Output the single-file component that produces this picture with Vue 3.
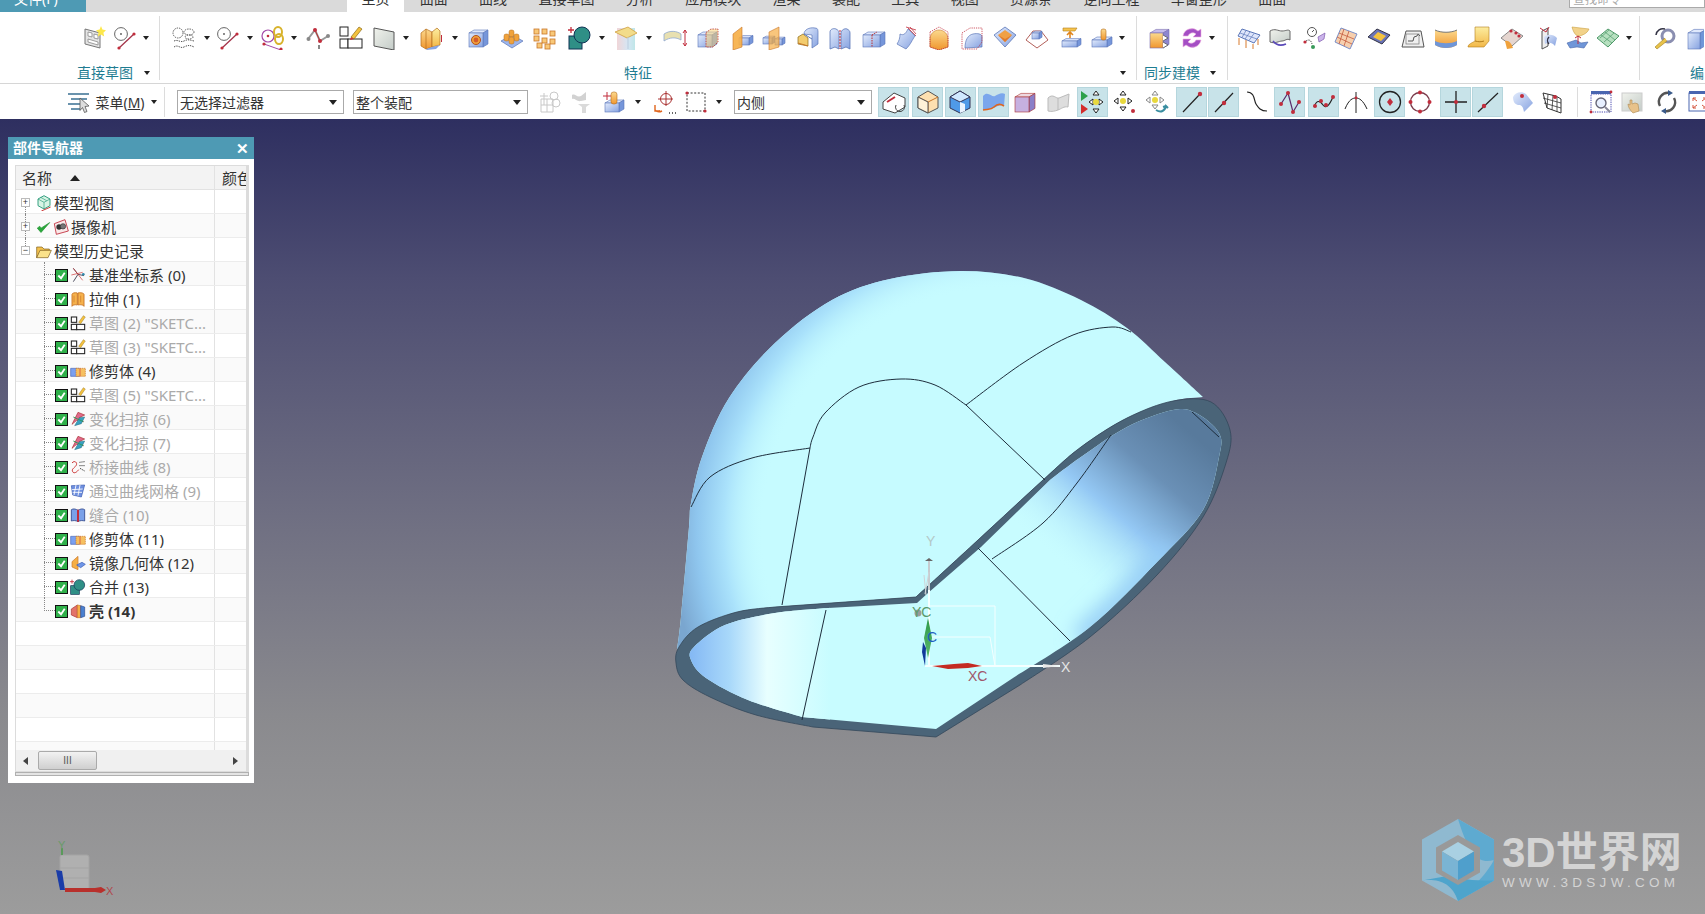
<script setup>
const pt = (p) => p[0] + ' ' + p[1]
const cr = (pts) => {
  let s = ''
  for (let i = 0; i < pts.length - 1; i++) {
    const p0 = pts[i - 1] || pts[i], p1 = pts[i], p2 = pts[i + 1], p3 = pts[i + 2] || p2
    const c1 = [p1[0] + (p2[0] - p0[0]) / 6, p1[1] + (p2[1] - p0[1]) / 6]
    const c2 = [p2[0] - (p3[0] - p1[0]) / 6, p2[1] - (p3[1] - p1[1]) / 6]
    s += ' C' + pt(c1) + ' ' + pt(c2) + ' ' + pt(p2)
  }
  return s
}
const open = (pts) => 'M' + pt(pts[0]) + cr(pts)

const domeP = [[677,650],[681,617],[689,527],[691,503],[702,457],[729,398],[775,343],[832,300],[890,279],[960,271],[1024,278],[1081,300],[1127,328],[1165,362],[1203,397]]
const rimTopBack = [[1203,397],[1173,401],[1127,418],[1081,447],[1043,480],[978,540],[916,597]]
const rimLeftBack = [[775,607],[737,612],[698,627],[679,647],[677,650]]
const domePath = open(domeP) + cr(rimTopBack) + ' L775 607' + cr(rimLeftBack) + ' Z'

const outerPath = 'M916 597' + cr([[916,597],[978,540],[1043,480],[1081,447],[1127,418],[1173,401],[1211,402],[1230,430],[1226,463],[1203,517],[1157,575],[1090,637],[1020,685]]) +
  ' L936 737 L813 727' + cr([[813,727],[756,715],[710,697],[683,680],[676,663],[679,647],[698,627],[737,612],[775,607]]) + ' Z'
const innerPath = 'M917 603 L828 608' + cr([[828,608],[775,613],[725,625],[694,647],[691,660],[706,678],[748,700],[802,717]]) +
  ' L936 729 L1013 678' + cr([[1013,678],[1090,627],[1157,562],[1203,510],[1219,457],[1219,433],[1196,413],[1173,410],[1127,427],[1081,457],[1050,480]]) + ' L981 547 L928 593 Z'

const edges = [
  open([[691,507],[710,477],[752,458],[810,448]]),
  'M810 448 L782 605',
  open([[810,448],[813,437],[825,413],[859,387],[901,379],[935,385],[966,405]]) + ' L1045 480',
  open([[966,405],[1023,363],[1073,335],[1112,327],[1131,332]]),
  'M826 610 L802 720',
  'M978 548 L1070 641',
  open([[992,559],[1043,523],[1077,483],[1111,435]]),
  'M1192 412 L1219 437',
]
const rimGlow = open([[1080,640],[1130,592],[1170,550]])

const box = (x, y, w, h, d, f = 'url(#gb)', t = '#dfe8fc', r = '#7696da', st = '#5a76b8') =>
  `<path d="M${x} ${y}l${d} ${-d * .6}h${w}l${-d} ${d * .6}z" fill="${t}" stroke="${st}" stroke-width=".6"/>` +
  `<path d="M${x + w} ${y}l${d} ${-d * .6}v${h}l${-d} ${d * .6}z" fill="${r}" stroke="${st}" stroke-width=".6"/>` +
  `<rect x="${x}" y="${y}" width="${w}" height="${h}" fill="${f}" stroke="${st}" stroke-width=".6"/>`
const rd = (x, y, r = 1.6) => `<circle cx="${x}" cy="${y}" r="${r}" fill="#c12d3c"/>`

const I = {
  star: '<path d="M2 3l15 4v15L2 18z" fill="#e4e4e4" stroke="#777"/><path d="M5 6l4 1v4l-4-1zM11 8l4 1v4l-4-1zM5 13l10 3v3L5 16z" fill="#fff" stroke="#888" stroke-width=".8"/><path d="M18 0l1.4 3.6 3.6.6-2.6 2.6.8 3.8-3.2-2-3.2 2 .8-3.8-2.6-2.6 3.6-.6z" fill="#fde84c"/>',
  cline: '<circle cx="8" cy="8" r="6.4" fill="#fff" stroke="#666"/><circle cx="8" cy="8" r=".9" fill="#555"/><path d="M6 22L21 8" stroke="#a33349" stroke-width="1.3"/>' + rd(6, 22) + rd(21, 8),
  ell: '<g fill="none" stroke="#555" stroke-dasharray="1.4 1"><circle cx="6" cy="7" r="5"/><ellipse cx="17" cy="6" rx="5" ry="3"/><ellipse cx="17" cy="11" rx="4" ry="2"/><path d="M2 15c4-2 6 2 10 0s6-1 10 0M2 21c4-3 6 2 10 0s6-2 10 0"/></g>',
  chain: '<circle cx="7" cy="10" r="6" fill="#fff" stroke="#a24aa8" stroke-width="1.2"/><circle cx="7" cy="10" r="1.3" fill="#c12d3c"/><g fill="none" stroke="#d8b32c" stroke-width="2"><ellipse cx="17" cy="6" rx="4" ry="5"/><ellipse cx="18" cy="13" rx="4" ry="5"/></g><path d="M3 18l17 6" stroke="#a24aa8"/>' + rd(3, 18) + rd(20, 23),
  zig: '<path d="M2 13L9 4l5 11 8-5" fill="none" stroke="#999" stroke-width="2"/><path d="M9 4l5 11" stroke="#b33"/><circle cx="2.5" cy="13" r="2" fill="#888"/><circle cx="22" cy="10" r="2" fill="#888"/>' + rd(9, 4, 2) + rd(14, 15, 2) + '<path d="M13 19v4" stroke="#888" stroke-width="2"/>',
  skbox: '<g fill="#fff" stroke="#222"><rect x="1" y="1" width="8" height="9"/><rect x="1" y="13" width="8" height="9"/><rect x="9" y="13" width="14" height="9"/></g><path d="M12 11L20 1l3 2-8 10z" fill="#f4c23e" stroke="#8a6a1a" stroke-width=".7"/><path d="M12 11l3 2-4 1z" fill="#c33"/>',
  plane: '<path d="M2 2l20 4v18L2 20z" fill="url(#gs)" stroke="#555"/>',
  extr: '<path d="M2 7l5-4 6 3v15l-6 2-5-3z" fill="url(#go)" stroke="#b46d1c" stroke-width=".7"/><path d="M13 6l5-4 3 3v14l-8 2z" fill="url(#gy)" stroke="#b46d1c" stroke-width=".7"/><path d="M2 18l5 5 6-2 8-2-4 4-9 1z" fill="#86a5e4"/><path d="M7 3v20" stroke="#b46d1c" stroke-width=".7"/><path d="M22.5 16V9" stroke="#c12d3c"/>',
  hole: box(2, 7, 14, 14, 5) + '<circle cx="9" cy="14" r="4.5" fill="#f0a23c" stroke="#b4501c"/><circle cx="9" cy="14" r="2.4" fill="#d45a2c"/>',
  pads: '<path d="M1 15l11-6 11 6-11 7z" fill="#9db6ec" stroke="#5a76b8" stroke-width=".7"/><g fill="#f0a23c" stroke="#b46d1c" stroke-width=".5"><rect x="9" y="4" width="5" height="7" rx="2"/><rect x="4" y="8" width="5" height="7" rx="2"/><rect x="14" y="8" width="5" height="7" rx="2"/><rect x="9" y="11" width="5" height="7" rx="2"/></g>',
  patt: '<g fill="#f8c878" stroke="#c9772a" stroke-width=".8"><rect x="1" y="3" width="5" height="5"/><rect x="9" y="3" width="5" height="5"/><rect x="17" y="5" width="5" height="5"/><rect x="1" y="10" width="5" height="5"/><rect x="9" y="12" width="5" height="5"/><rect x="17" y="13" width="5" height="5"/><rect x="4" y="17" width="5" height="5"/><rect x="12" y="18" width="5" height="5"/></g>',
  unite: '<rect x="1" y="10" width="13" height="13" fill="#2f8f86" stroke="#135"/><circle cx="14" cy="9" r="8" fill="#2f8f86" stroke="#135"/><path d="M3 1v6M0 4h6" stroke="#c12d3c" stroke-width="1.3"/>',
  trim: '<rect x="3" y="2" width="18" height="22" fill="url(#gt)"/><path d="M1 6l13-5 9 6-10 5z" fill="#f2dc8a" stroke="#d0a040" stroke-width=".8"/><path d="M14 11v12" stroke="#bcd" />',
  offs: '<path d="M1 8c6-4 13-3 17 0v6c-5-3-11-3-17 1z" fill="#e8e0b0" stroke="#8fa8d0" stroke-width=".8"/><path d="M22 4v16M20 7l2-3 2 3M20 17l2 3 2-3" fill="none" stroke="#c12d3c"/>',
  ubox: box(2, 9, 14, 12, 5) + '<path d="M10 6.500l5-3.500h7v13l-5 5h-7z" fill="#f8d27a" fill-opacity=".55" stroke="#b33" stroke-dasharray="1.5 1" stroke-width=".8"/>',
  mir: box(9, 12, 10, 7, 4) + '<path d="M3 8l9-7v20l-9 3z" fill="#f6ae45" fill-opacity=".9" stroke="#c9772a" stroke-width=".6"/>',
  mir2: box(1, 12, 9, 6, 3) + box(13, 13, 7, 6, 3) + '<path d="M7 6l10-5v20l-10 3z" fill="#f6ae45" fill-opacity=".7" stroke="#c9772a" stroke-width=".6"/>',
  shellb: '<path d="M2 11l5-3 5 4v8l-10-2z" fill="#f3cc6e" stroke="#8a6a1a" stroke-width=".7"/><path d="M8 8c0-4 5-7 11-6 3 0 3 2 3 5v11l-6 4v-13z" fill="url(#gb)" stroke="#5a76b8" stroke-width=".7"/><path d="M8 8l8 5" stroke="#5a76b8"/><path d="M2 17l10 3" stroke="#c9772a"/>',
  book: '<path d="M2 6c0-3 4-4 6-3s3 2 3 4v16l-4-2-5 2zM13 7c0-3 4-5 6-4s3 2 3 4v16l-4-2-5 2z" fill="url(#gb)" stroke="#5a76b8" stroke-width=".8"/><path d="M12 4v19" stroke="#c12d3c" stroke-dasharray="2 1"/>',
  split: box(1, 9, 17, 12, 5) + '<path d="M10 9v12M10 9l5-3" stroke="#b33" stroke-dasharray="1.5 1" fill="none"/>',
  sfold: '<path d="M6 8c4 2 6-1 8-5l7 7c-3 4-4 8-9 13l-9-5c2-3 3-6 3-10z" fill="url(#gb)" stroke="#5a76b8" stroke-width=".7"/><path d="M12 1l10 3M14 2l8 8M16 1l6 7" stroke="#c12d3c" stroke-width=".8"/>',
  dhat: '<path d="M3 13c0-5 4-9 9-9s9 4 9 9v8l-9 3-9-3z" fill="url(#go)" stroke="#c9772a" stroke-width=".6"/><path d="M3 6l9-5 9 5v15l-9 3-9-3z" fill="none" stroke="#c12d3c" stroke-dasharray="1.2 1" stroke-width=".8"/>',
  dcurve: '<path d="M5 22c0-8 3-13 8-14s8 0 9 2v11z" fill="url(#gb)" stroke="#5a76b8" stroke-width=".7"/><path d="M2 7l8-5h12v14l-5 7H2z" fill="none" stroke="#c12d3c" stroke-dasharray="1.2 1" stroke-width=".8"/>',
  bowl: '<path d="M12 1l11 8-11 12L1 9z" fill="url(#gb)" stroke="#5a76b8" stroke-width=".8"/><path d="M5 9l7-5 7 5-7 7z" fill="#f0a045"/><path d="M5 9l7 4 7-4-7 7z" fill="#e07b2c"/>',
  pyr: '<path d="M1 14L8 5h8l7 9-11 8z" fill="#fff" stroke="#b3605a"/>' + box(7, 7, 7, 6, 3, 'url(#gb)'),
  offa: '<path d="M4 2h14l-2 3H4z" fill="#f6c34c" stroke="#b47d1c" stroke-width=".6"/><path d="M11 12V6M8 9l3-3 3 3" fill="none" stroke="#e0851c" stroke-width="1.6"/>' + box(3, 15, 15, 6, 4),
  boss: box(2, 14, 15, 7, 5) + '<rect x="11" y="3" width="5" height="11" rx="2" fill="url(#go)" stroke="#b46d1c" stroke-width=".6"/>',
  sync: box(2, 7, 13, 15, 6, 'url(#go)', '#c6bcec', '#8e86d0', '#7a6db0') + '<path d="M15 9l5 3-5 3M15 16l5 3-5 3" fill="#fff" stroke="#555" stroke-width=".8"/>',
  refr: '<path d="M3 10a9 9 0 0 1 15-5l3-2v8h-8l3-3a5 5 0 0 0-8 2zM21 14a9 9 0 0 1-15 5l-3 2v-8h8l-3 3a5 5 0 0 0 8-2z" fill="#a44ec4" stroke="#f0b0e0" stroke-width=".6"/>',
  mesh: '<path d="M5 3l18 6-6 8L1 10z" fill="#dfe6fb" stroke="#5a76b8"/><path d="M9 4.500l-4 7M13 6l-5 7M17 7.500l-5 7M3 7l17 6" stroke="#5a76b8" stroke-width=".7"/><g stroke="#d87a2c" fill="none"><path d="M2 12v7M9 14v8M16 18v5M21 13v6"/></g>',
  wave: '<path d="M2 5c5-3 8 0 12 0s6-2 8 0v9c-3-2-5 1-8 1s-7 3-12 1z" fill="url(#gs)" stroke="#666"/><path d="M5 15c3 4 8 5 13 3" stroke="#5a49b8" fill="none" stroke-width="1.6"/>',
  gauge: '<circle cx="9" cy="6" r="4.500" fill="#fff" stroke="#555"/><path d="M9 6l2-2" stroke="#555"/><path d="M3 15c3-2 5-1 6 3" stroke="#555" fill="none" stroke-dasharray="1.5 1"/><path d="M15 11l7-4-1 6-5 3z" fill="#cbb4ea" stroke="#805ab0" stroke-width=".7"/>' + rd(2, 16) + '<circle cx="10" cy="21" r="2" fill="#3a9a5a"/>',
  grid: '<path d="M7 2l16 6-7 15L1 16z" fill="#f6cfae" stroke="#7a8fc8"/><path d="M5 7l15 6M3 11l15 7M10 3l-5 15M15 5l-5 15" stroke="#c45a3c" stroke-width=".8"/>',
  pat: '<path d="M1 11l9-8 13 6-8 9z" fill="#6a74b8" stroke="#334"/><path d="M6 11l5-5 8 4-5 5z" fill="#f4c23e"/>',
  frame: '<path d="M5 5h15l3 16H1z" fill="#f0f0f0" stroke="#555"/><path d="M7 15h5l1-4 3-1 1-2 2 2" stroke="#555" fill="none"/><rect x="5" y="8" width="13" height="10" fill="none" stroke="#777" stroke-width=".7"/>',
  uflag: '<path d="M1 4c6 3 16 3 22 0v15c-6 4-16 4-22 0z" fill="url(#go)"/><path d="M1 15c6 3 16 3 22 0v4c-6 4-16 4-22 0z" fill="#6f96d8"/><path d="M1 4c6 3 16 3 22 0" stroke="#777" fill="none"/>',
  ysurf: '<path d="M9 1h14v14l-5 6H2c0-3 4-4 7-6z" fill="url(#gy)" stroke="#b47d1c" stroke-width=".6"/><path d="M9 15c4 1 6 1 9 0" stroke="#b47d1c" fill="none"/>',
  netw: '<path d="M1 12l11-9 11 7-11 10z" fill="#e6d6d0" stroke="#888"/><path d="M5 15c4-1 6 2 8 7l-6 1z" fill="#f0a23c"/>' + rd(11, 5) + rd(16, 7) + rd(19, 10),
  plc: '<path d="M7 5l6-3v18l-6 3z" fill="#eee" stroke="#555"/><path d="M9 11c4-3 9-3 13 1l-2 8c-3-4-7-4-10-2z" fill="url(#gb)"/><path d="M5 2l6 4 3-5" stroke="#c12d3c" fill="none"/><path d="M14 11a5 5 0 0 0 0 7" stroke="#334" fill="none" stroke-width="1.4"/>',
  ybr: '<path d="M6 1l17 2c-2 5-7 6-9 7s-6-1-8-9z" fill="#f2d28a" stroke="#c9a040" stroke-width=".6"/><path d="M1 17l9-3 5 3 7-1-4 6-7-1-7 1z" fill="#6f96d8" stroke="#4a66a8" stroke-width=".6"/><path d="M12 10v8M9 12l3-2 3 2" stroke="#c12d3c" fill="none"/>',
  gmesh: '<path d="M1 12l11-9 11 7-11 11z" fill="#b7e0c0" stroke="#4f9a6a"/><path d="M5 9l11 8M9 6l10 8M8 16l10-9M4 12l9-8" stroke="#4f9a6a" stroke-width=".7"/>',
  tool: '<circle cx="16" cy="10" r="6" fill="none" stroke="#8a8eb0" stroke-width="3"/><path d="M13 12L3 21l2 2 10-8" fill="#e8c24a" stroke="#a08020" stroke-width=".6"/><path d="M4 9a7 7 0 0 1 9-6" stroke="#334" fill="none" stroke-width="1.5"/>',
  bcyl: box(3, 7, 12, 16, 6, 'url(#gb)', '#dfe8fc', '#6f96d8'),
  tcyl: box(3, 13, 14, 9, 5) + '<rect x="9" y="2" width="6" height="12" rx="2.500" fill="url(#go)" stroke="#b46d1c" stroke-width=".6"/><path d="M1 6h8M5 2v8" stroke="#c12d3c"/>',
  gr1: '<g fill="none" stroke="#c8c8c8"><path d="M3 9h12v13H3zM3 15h12M9 9v13M6 3v12M2 6h8"/><circle cx="16" cy="6" r="4"/><circle cx="18" cy="13" r="4"/></g>',
  gr2: '<path d="M3 5c3-2 5 3 9 1l5-4v8l-5 1c-4 1-6-3-9-2z" fill="#d2d2d2"/><path d="M9 14h12l-4 3v6h-4v-6z" fill="#dadada"/>',
  tgt: '<circle cx="13" cy="9" r="5.500" fill="none" stroke="#a33"/><path d="M13 1v15M5 9h15" stroke="#a33"/><path d="M2 20c2 2 5 2 7 1M2 15v6h5" fill="none" stroke="#e0651c" stroke-width="1.4"/><path d="M16 23h1M19 23h1M22 23h1" stroke="#333" stroke-width="1.6"/>',
  dash: '<rect x="3" y="3" width="18" height="18" fill="none" stroke="#333" stroke-dasharray="2 1.600"/>' + rd(3, 3) + rd(21, 21),
  cat1: '<path d="M1 12L12 3l11 5v9l-10 6-12-4z" fill="#fff" stroke="#444"/><path d="M5 12l8-5" stroke="#c12d3c" stroke-width="2" fill="none"/><path d="M14 15a4.500 4.500 0 1 0 8 0" fill="none" stroke="#444"/>',
  cat2: '<path d="M12 1l10 6v11l-10 5L2 18V7z" fill="#fde0b0" stroke="#555"/><path d="M12 12l10-5M12 12L2 7M12 12v11" stroke="#c9772a"/><path d="M2 7l10 5v11L2 18z" fill="#fff2d8" stroke="#555"/>',
  cat3: '<path d="M12 1l10 6v11l-10 5L2 18V7z" fill="#4f9ae8" stroke="#335"/><path d="M2 7l10-6 10 6-10 5z" fill="#cfe8ff" stroke="#335"/><path d="M12 12l5 2v7l-5 2z" fill="#eaf4ff"/>',
  cat4: '<path d="M1 6c5-6 9 2 12 0s7-4 10-2l-1 12c-4-2-7 1-11 2s-7 2-10 2z" fill="#7aa6ec"/><path d="M1 20c5-1 8 0 11-3s7-3 10-1" stroke="#e0651c" stroke-width="1.6" fill="none"/>',
  cat5: box(2, 7, 14, 15, 6, '#c6b0e0', '#eed8e0', '#8a7fc8', '#a33'),
  gsf: '<path d="M1 8c5-5 8 1 11 0l10-4-1 13c-4-1-7 2-10 3s-6 2-10 1z" fill="#ddd" stroke="#bbb"/><path d="M11 8v12" stroke="#bbb"/>',
  snap: '<path d="M1 1l7 5-7 5z" fill="#2ca04a"/><path d="M1 14l7 5-7 5z" fill="#d42c2c"/><g fill="#fff" stroke="#222"><path d="M16 1l3 4h-6zM16 23l3-4h-6zM9 12l4-3v6zM23 12l-4-3v6z"/></g><circle cx="16" cy="12" r="3" fill="#e8d83c"/>',
  snap2: '<g fill="#fff" stroke="#222"><path d="M11 1l3 4H8zM11 21l3-4H8zM2 11l4-3v6zM20 11l-4-3v6z"/></g><circle cx="11" cy="11" r="3" fill="#e8d83c"/><circle cx="21" cy="21" r="2" fill="#c12d3c"/>',
  snap3: '<g fill="#fff" stroke="#888"><path d="M10 1l3 4H7zM10 19l3-4H7zM1 10l4-3v6zM19 10l-4-3v6z"/></g><circle cx="10" cy="10" r="3" fill="#e8d83c"/><path d="M11 20c5 3 9 1 10-4l2 2M21 16l-3 1" stroke="#3a8ea0" fill="none" stroke-width="2"/>',
  sl1: '<path d="M3 22L20 4" stroke="#222" stroke-width="1.2"/>' + rd(20, 4, 2.2),
  sl2: '<path d="M3 22L21 3" stroke="#222" stroke-width="1.2"/>' + rd(12, 13, 2.2),
  tan: '<path d="M2 2c8 0 7 9 9 12s4 7 11 7" fill="none" stroke="#222" stroke-width="1.2"/>',
  wz: '<path d="M3 14L10 3l5 19 6-10" fill="none" stroke="#5a2a6a" stroke-width="1.2"/>' + rd(3, 14, 2) + rd(10, 3, 2) + rd(15, 22, 2) + rd(21, 12, 2),
  wv: '<path d="M2 17c3-8 6-6 9-2s6 1 10-8" fill="none" stroke="#222" stroke-width="1.2"/>' + rd(3, 16, 2) + rd(9, 11, 2) + rd(14, 15, 2) + rd(21, 7, 2),
  arcx: '<path d="M1 19c4-10 8-11 11-11s7 2 11 11" fill="none" stroke="#222"/><path d="M12 2v21" stroke="#222"/>' + rd(12, 8, 1.4),
  ccen: '<circle cx="12" cy="12" r="10.500" fill="none" stroke="#222" stroke-width="1.3"/><path d="M12 8l3 4-3 4-3-4z" fill="#c12d3c"/>',
  cq: '<circle cx="12" cy="12" r="9.500" fill="none" stroke="#7a3a4a" stroke-width="1.3"/>' + rd(12, 2.5, 2) + rd(12, 21.5, 2) + rd(2.5, 12, 2) + rd(21.5, 12, 2),
  cross: '<path d="M12 1v22M1 12h22" stroke="#222" stroke-width="1.3"/>' + rd(12, 12, 2),
  sl3: '<path d="M2 22L22 3" stroke="#222" stroke-width="1.2"/>' + rd(8, 16, 2.2),
  sfc: '<path d="M3 7c2-5 9-6 13-3l7 9-9 9c-1-5-2-7-5-7s-6-2-6-8z" fill="url(#gb)"/>' + rd(12, 6, 2),
  gmsh: '<path d="M3 3l13 3 5 3v14l-14-5z" fill="#fff" stroke="#333"/><path d="M3 8l18 5M4 13l17 5M8 4l-1 14M13 5l-1 15M17 7v15" stroke="#333" stroke-width=".8"/>' + rd(15, 7, 2),
  zfit: '<rect x="2" y="4" width="20" height="18" fill="#fff" stroke="#4a4ab0" stroke-dasharray="1.3 1"/><path d="M2 1h20v3H2z" fill="#4a66b0"/><circle cx="12" cy="13" r="5" fill="#e8f0ff" stroke="#667" stroke-width="1.4"/><path d="M16 17l5 5" stroke="#889" stroke-width="2"/>' + rd(2, 22, 1.4) + rd(22, 2, 1.4),
  pan: '<rect x="2" y="3" width="20" height="18" fill="url(#gs)" stroke="#ccc"/><path d="M13 23c-3-3-5-6-5-9l2 1v-5l2 0v4l3-1 3 1 1 7z" fill="#e8c28a" stroke="#b08a50" stroke-width=".6"/>',
  rot: '<path d="M5 16A9 9 0 0 1 15 3M19 8a9 9 0 0 1-10 13" fill="none" stroke="#555" stroke-width="2.4"/><path d="M13 0l5 3-5 3zM11 24l-5-3 5-3z" fill="#3a5a8a"/>',
  fit: '<rect x="2" y="3" width="21" height="18" fill="#fff" stroke="#4a66b0"/><path d="M2 1h21v3H2z" fill="#4a66b0"/><path d="M6 8l4 3M6 8h3M6 8v3M19 8l-4 3M19 8h-3M19 8v3M6 18l4-3M6 18h3M6 18v-3M19 18l-4-3M19 18h-3M19 18v-3" stroke="#d4553c" fill="none"/>',
  nview: '<path d="M12 1l9 5v10l-9 5-9-5V6z" fill="#d8f4e4" stroke="#2a9a7a" stroke-width="1.4"/><path d="M3 6l9 5 9-5M12 11v10M7 3.500l9 5" stroke="#2a9a7a" fill="none"/><path d="M8 24l14-6" stroke="#c33" stroke-width="1.4"/>',
  ncam: '<path d="M2 7l16-6 5 17-18 5z" fill="#f8e8e8" stroke="#c12d3c" stroke-width="1.3"/><circle cx="9" cy="12" r="4" fill="#333"/><circle cx="15" cy="11" r="4" fill="#777" stroke="#333"/>',
  ncheck: '<path d="M2 13l6 7L22 4l-14 9-2-3z" fill="#2aa83c" stroke="#1b8f2c"/>',
  nfold: '<path d="M1 6h8l3 3h8v3H7l-6 10z" fill="#f3c14e" stroke="#7a5a1a"/><path d="M6 11h17l-5 11H1z" fill="#fbe28a" stroke="#7a5a1a"/>',
  ncs: '<path d="M5 2l7 9 9 2M12 11L5 22" fill="none" stroke="#445" stroke-width="1.4"/><path d="M5 2l14 18M2 12l17-4" stroke="#c33" fill="none"/><circle cx="20" cy="11" r="2" fill="#38a"/>',
  next: '<path d="M3 5c0-2 5-3 8-2v18c-3-1-8 0-8 2zM21 5c0-2-6-3-9-2v18c3-1 9 0 9 2z" fill="#f6b24c" stroke="#c9772a" stroke-width="1.4"/><path d="M6 7v10M16 7v10" stroke="#c9772a"/>',
  nsk: '<g fill="#fff" stroke="#222" stroke-width="1.6"><rect x="2" y="3" width="8" height="8"/><rect x="2" y="14" width="8" height="8"/><rect x="10" y="14" width="12" height="8"/></g><path d="M13 11L20 1l3 2-7 10z" fill="#f4c23e" stroke="#8a6a1a" stroke-width=".6"/>',
  ntrim: '<path d="M1 8h13v12H1z" fill="#7aa0f0" stroke="#4a66b8"/><path d="M9 8h14v12H9z" fill="#f6c060" stroke="#c9772a" stroke-dasharray="2 1"/><path d="M15 8v12" stroke="#c33"/>',
  nsw: '<path d="M3 20L12 2l10 4-8 4 6 6-10-2z" fill="#e06a8c" stroke="#a33"/><path d="M7 22l7-12 8-1-5 10z" fill="#38a0c0" stroke="#267" stroke-width=".7"/><path d="M5 9l15 7" stroke="#2a9a5a" stroke-width="1.4"/>',
  nbr: '<path d="M3 6c4-5 9 0 6 4s-7 5-5 9 7 0 9-3" fill="none" stroke="#c33" stroke-width="1.5"/><path d="M14 5l8-1M14 10h8M15 14l7 4" stroke="#333" stroke-width="1.3" stroke-dasharray="2 1"/>',
  nmesh: '<path d="M2 4l20-1-5 18-13-3z" fill="#6f90e0" stroke="#3a5ab0"/><path d="M3 10l16-1M4 14l14 0M9 3l-3 15M15 3l-3 16" stroke="#fff" stroke-width="1.3"/>',
  nsew: '<path d="M2 4c3-2 7-1 10 1v17c-3-2-7-2-10-1zM22 4c-3-2-7-1-10 1v17c3-2 7-2 10-1z" fill="#7aa0e8" stroke="#334a90" stroke-width="1.3"/><path d="M12 4v18" stroke="#c12d3c" stroke-width="3"/>',
  nmir: '<path d="M3 10l9-8v20l-9-4z" fill="#f6ae45" stroke="#c9772a"/><path d="M10 15l8-4 5 3-7 5z" fill="#6f96e8" stroke="#3a5ab0"/>',
  nshell: '<path d="M2 9l9-6v19l-9-4z" fill="#e2736a" stroke="#a33"/><path d="M11 3l5 1v18l-5 0z" fill="#f6ae45" stroke="#c9772a"/><path d="M16 4l6 2v14l-6 2z" fill="#4a80d0" stroke="#2a4a90"/>',
}

const place = (list, start = 0) => {
  let cur = start
  return list.map((it) => {
    const w = it.w || (it.k === 'dd' ? 7 : it.on !== undefined ? 31 : 24)
    const l = it.x - w / 2
    const out = { k: 'i', ...it, w, ml: l - cur }
    cur = l + w
    return out
  })
}
const ic = (x, i) => ({ x, i })
const dd = (x) => ({ x, k: 'dd' })
const on = (x, i) => ({ x, i, on: true })

const groups = [
  { w: 160, start: 0, label: '直接草图', lx: 105, lw: 56, ddx: 147,
    items: [ic(95, 'star'), ic(125, 'cline'), dd(146)] },
  { w: 977, start: 161, label: '特征', lx: 639, lw: 28, ddx: 1124,
    items: [ic(185, 'ell'), dd(208), ic(229, 'cline'), dd(251), ic(274, 'chain'), dd(295), ic(319, 'zig'), ic(352, 'skbox'), ic(385, 'plane'), dd(407), ic(432, 'extr'), dd(456), ic(480, 'hole'), ic(513, 'pads'), ic(546, 'patt'), ic(581, 'unite'), dd(603), ic(627, 'trim'), dd(650), ic(676, 'offs'), ic(709, 'ubox'), ic(743, 'mir'), ic(775, 'mir2'), ic(809, 'shellb'), ic(841, 'book'), ic(875, 'split'), ic(907, 'sfold'), ic(940, 'dhat'), ic(973, 'dcurve'), ic(1006, 'bowl'), ic(1038, 'pyr'), ic(1072, 'offa'), ic(1103, 'boss'), dd(1123)] },
  { w: 91, start: 1138, label: '同步建模', lx: 1173, lw: 56, ddx: 1214,
    items: [ic(1161, 'sync'), ic(1193, 'refr'), dd(1213)] },
  { w: 412, start: 1229, label: '', items: [ic(1250, 'mesh'), ic(1281, 'wave'), ic(1316, 'gauge'), ic(1347, 'grid'), ic(1380, 'pat'), ic(1414, 'frame'), ic(1447, 'uflag'), ic(1479, 'ysurf'), ic(1513, 'netw'), ic(1548, 'plc'), ic(1579, 'ybr'), ic(1609, 'gmesh'), dd(1630)] },
  { w: 64, start: 1642, label: '编辑', lx: 1706, lw: 28, items: [ic(1666, 'tool'), ic(1699, 'bcyl')] },
].map((g) => ({
  ...g,
  row: place(g.items, g.start),
  labelMl: g.label ? g.lx - g.lw / 2 - g.start : 0,
  ddMl: g.ddx ? g.ddx - 3.5 - (g.lx + g.lw / 2) : 0,
}))

const toolbar = place([
  { x: 79, k: 'menu', i: 'menu', w: 24 },
  { x: 120, k: 'txt', w: 52 },
  dd(154),
  { x: 164, k: 'sep', w: 1 },
  { x: 260.5, k: 'sel', w: 167, t: '无选择过滤器' },
  { x: 440.5, k: 'sel', w: 175, t: '整个装配' },
  ic(550, 'gr1'), ic(581, 'gr2'), ic(614, 'tcyl'), dd(638), ic(665, 'tgt'), ic(696, 'dash'), dd(719),
  { x: 803, k: 'sel', w: 138, t: '内侧' },
  on(893.5, 'cat1'), on(927.5, 'cat2'), on(960, 'cat3'), on(993.5, 'cat4'), ic(1025, 'cat5'), ic(1059, 'gsf'), on(1092, 'snap'), ic(1124, 'snap2'), ic(1157, 'snap3'),
  on(1191.5, 'sl1'), on(1223.5, 'sl2'), ic(1257, 'tan'), on(1289.5, 'wz'), on(1323.5, 'wv'), ic(1356, 'arcx'), on(1389.5, 'ccen'), ic(1420, 'cq'), on(1455.5, 'cross'), on(1487.5, 'sl3'), ic(1522, 'sfc'), ic(1552, 'gmsh'),
  { x: 1577, k: 'sep', w: 1 },
  ic(1601, 'zfit'), ic(1632, 'pan'), ic(1667, 'rot'), ic(1699, 'fit'),
])

const tabs = ['曲面', '曲线', '直接草图', '分析', '应用模块', '渲染', '装配', '工具', '视图', '资源条', '逆向工程', '车窗整形', '曲面']

const topRows = [
  { t: '模型视图', i: 'nview', ex: '+' },
  { t: '摄像机', i: 'ncam', ex: '+', chk: true },
  { t: '模型历史记录', i: 'nfold', ex: '−' },
]
const kids = [
  ['基准坐标系 (0)', 'ncs', 0], ['拉伸 (1)', 'next', 0], ['草图 (2) "SKETC...', 'nsk', 1], ['草图 (3) "SKETC...', 'nsk', 1],
  ['修剪体 (4)', 'ntrim', 0], ['草图 (5) "SKETC...', 'nsk', 1], ['变化扫掠 (6)', 'nsw', 1], ['变化扫掠 (7)', 'nsw', 1],
  ['桥接曲线 (8)', 'nbr', 1], ['通过曲线网格 (9)', 'nmesh', 1], ['缝合 (10)', 'nsew', 1], ['修剪体 (11)', 'ntrim', 0],
  ['镜像几何体 (12)', 'nmir', 0], ['合并 (13)', 'unite', 0], ['壳 (14)', 'nshell', 0, 1],
].map(([t, i, g, b]) => ({ t, i, g, b }))
</script>

<template>
  <div class="app">
    <svg class="defs" width="0" height="0" aria-hidden="true">
      <defs>
        <linearGradient id="gb" x1="0" y1="0" x2="1" y2="1"><stop offset="0" stop-color="#e2ebfc"/><stop offset="1" stop-color="#86a2e0"/></linearGradient>
        <linearGradient id="go" x1="0" y1="0" x2="0" y2="1"><stop offset="0" stop-color="#fbd98e"/><stop offset="1" stop-color="#f0962e"/></linearGradient>
        <linearGradient id="gy" x1="0" y1="0" x2="0" y2="1"><stop offset="0" stop-color="#fcedA0"/><stop offset="1" stop-color="#f2b848"/></linearGradient>
        <linearGradient id="gs" x1="0" y1="0" x2="1" y2="1"><stop offset="0" stop-color="#f0f2ec"/><stop offset="1" stop-color="#c4ccc8"/></linearGradient>
        <linearGradient id="gt" x1="0" y1="0" x2="1" y2="0"><stop offset="0" stop-color="#f0d6d8"/><stop offset=".6" stop-color="#d6e6f4"/><stop offset="1" stop-color="#bfe6e8"/></linearGradient>
      </defs>
    </svg>

    <div class="tabs">
      <div class="tabrow">
        <div class="file">文件(F)</div>
        <div class="tab active">主页</div>
        <div v-for="(t, n) in tabs" :key="n" class="tab">{{ t }}</div>
        <div class="search">查找命令</div>
      </div>
    </div>

    <div class="ribbon">
      <div v-for="g in groups" :key="g.start" class="group" :class="{ last: g.start === 1642 }" :style="{ width: g.w + 'px' }">
        <div class="grow">
          <div v-for="(it, n) in g.row" :key="n" class="cell" :style="{ marginLeft: it.ml + 'px', width: it.w + 'px' }">
            <span v-if="it.k === 'dd'" class="tri"></span>
            <svg v-else class="ic" viewBox="0 0 24 24" v-html="I[it.i]"></svg>
          </div>
        </div>
        <div class="glabel" :style="{ paddingLeft: g.labelMl + 'px' }">
          <span class="lt">{{ g.label }}</span>
          <span v-if="g.ddx" class="tri lowtri" :style="{ marginLeft: g.ddMl + 'px' }"></span>
        </div>
      </div>
    </div>

    <div class="toolbar">
      <div v-for="(it, n) in toolbar" :key="n" class="cell" :class="{ on: it.on, sepc: it.k === 'sep' }" :style="{ marginLeft: it.ml + 'px', width: it.w + 'px' }">
        <span v-if="it.k === 'dd'" class="tri"></span>
        <span v-else-if="it.k === 'txt'" class="menut">菜单(<u>M</u>)</span>
        <div v-else-if="it.k === 'sel'" class="sel"><span>{{ it.t }}</span><i class="tri big"></i></div>
        <svg v-else-if="it.k === 'menu'" class="ic" viewBox="0 0 24 24">
          <path d="M1 3h21v2H1zM4 8h16v2H4zM1 13h12v2H1zM4 18h10v2H4z" fill="#6a93ad"/>
          <path d="M13 8l9 8-4 .5 2 5-2.500 1-2-5-2.500 3z" fill="#ddd" stroke="#555" stroke-width=".8"/>
        </svg>
        <svg v-else-if="it.k === 'i'" class="ic" viewBox="0 0 24 24" v-html="I[it.i]"></svg>
      </div>
    </div>

    <div class="view">
      <svg class="scene" viewBox="0 119 1705 795" width="1705" height="795">
        <defs>
          <clipPath id="innerClip"><path :d="innerPath"/></clipPath>
          <filter id="b14" x="-30%" y="-30%" width="160%" height="160%"><feGaussianBlur stdDeviation="10"/></filter>
          <radialGradient id="domeR" gradientUnits="userSpaceOnUse" cx="1005" cy="530" r="335">
            <stop offset=".72" stop-color="#c6fbff" stop-opacity="0"/>
            <stop offset=".84" stop-color="#aae2fb"/>
            <stop offset=".92" stop-color="#8fc6ee"/>
            <stop offset="1" stop-color="#7aa6cf"/>
          </radialGradient>
          <linearGradient id="rightIn" gradientUnits="userSpaceOnUse" x1="1205" y1="445" x2="1085" y2="585">
            <stop offset="0" stop-color="#587a9c"/><stop offset=".3" stop-color="#6a90b6"/><stop offset=".6" stop-color="#94c8f4"/><stop offset="1" stop-color="#c8fcff" stop-opacity="0"/>
          </linearGradient>
          <linearGradient id="leftIn" gradientUnits="userSpaceOnUse" x1="690" y1="0" x2="830" y2="0">
            <stop offset="0" stop-color="#84b8f4"/><stop offset=".28" stop-color="#a8d8fa"/><stop offset=".55" stop-color="#e8ffff"/><stop offset="1" stop-color="#c8fcff"/>
          </linearGradient>
          <linearGradient id="spindleG" x1="0" y1="0" x2="0" y2="1"><stop offset="0" stop-color="#2f9a4a"/><stop offset="1" stop-color="#5ab86a"/></linearGradient>
        </defs>

        <path :d="domePath" fill="#c6fbff"/>
        <path :d="domePath" fill="url(#domeR)"/>

        <path :d="outerPath" fill="#4a6478"/>
        <path :d="innerPath" fill="#c8fcff"/>
        <g clip-path="url(#innerClip)">
          <rect x="680" y="600" width="150" height="135" fill="url(#leftIn)"/>
          <rect x="960" y="390" width="270" height="300" fill="url(#rightIn)"/>
          <path :d="rimGlow" fill="none" stroke="#94ccf6" stroke-width="22" filter="url(#b14)"/>
        </g>

        <path v-for="(d, n) in edges" :key="n" :d="d" fill="none" stroke="#1d2d3c" stroke-width="1"/>
        <path :d="outerPath" fill="none" stroke="#33475a" stroke-width=".8"/>

        <g fill="none" stroke="#f4ffff">
          <path d="M995 606H929M995 606V666M929 637H990L995 666" stroke-width="1"/>
          <path d="M929 590V666M925 666H1060" stroke-width="2"/>
        </g>
        <path d="M929 560V590" stroke="#c6ccd0" stroke-width="2"/>
        <path d="M925 561h8l-4 -3z" fill="#666"/>
        <path d="M924 575l2 20M929 572l-4 22" stroke="#cfd4d8" stroke-width="1"/>
        <path d="M928 618l4 20-4 20-4-20z" fill="url(#spindleG)"/>
        <path d="M923 642l3 6 -1 18-3-14z" fill="#123a9a"/>
        <path d="M932 666l22-2 14-1 14 3-14 2-20 1z" fill="#c42a22"/>
        <path d="M1043 664l8 1 9 1-9 1-8 1z" fill="#e8e8e8"/>
        <circle cx="918" cy="613" r="3.500" fill="#9a9a9a"/>
        <g font-family="'Liberation Sans', sans-serif" font-size="14">
          <text x="926" y="546" fill="#b4c8c8">Y</text>
          <text x="912" y="617" fill="#5a9a6a">YC</text>
          <text x="927" y="642" fill="#1f5ec0">C</text>
          <text x="968" y="681" fill="#a0566a">XC</text>
          <text x="1061" y="672" fill="#e6e6e6">X</text>
        </g>

        <rect x="60" y="855" width="29" height="35" rx="2" fill="#b0b0b0" stroke="#a4a4a4"/>
        <path d="M60 868h29M60 878h29" stroke="#a4a4a4"/>
        <path d="M62 855V848" stroke="#5a9a5a" stroke-width="2"/>
        <path d="M56 870l6 1 3 19h-5z" fill="#1a3ca8"/>
        <path d="M65 888h30l6-1 5 3-5 3-6-1H65z" fill="#b8302c"/>
        <g font-family="'Liberation Sans', sans-serif" font-size="11">
          <text x="58" y="849" fill="#6a9a6a">Y</text>
          <text x="106" y="895" fill="#b0484c">X</text>
        </g>

        <path d="M1458 819l36 20.500v41L1458 901l-36-20.500v-41z" fill="#8fb9d0"/>
        <path d="M1458 819l36 20.500v41l-36 20.500c10-14 22-16 36-41-14 4-24-2-36-41z" fill="#5eaad0"/>
        <path d="M1422 880.500c16-2 30 2 36 20.500l36-20.500c-14 0-30 0-44-5z" fill="#4ea4cc"/>
        <path d="M1458 835l22 12.500v25L1458 885l-22-12.500v-25z" fill="#999"/>
        <path d="M1458 842l16 9.500-16 9.500-16-9.500z" fill="#a9d0e2"/>
        <path d="M1442 851.500l16 9.500v19l-16-9.500z" fill="#7ab4d4"/>
        <path d="M1474 851.500l-16 9.500v19l16-9.500z" fill="#4f9fcc"/>
      </svg>

      <div class="wm">
        <div class="wm1">3D世界网</div>
        <div class="wm2">WWW.3DSJW.COM</div>
      </div>

      <div class="panel">
        <div class="ptitle"><span>部件导航器</span><span class="px">✕</span></div>
        <div class="table">
          <div class="thead">
            <div class="c1">名称<i class="up"></i></div>
            <div class="c2">颜色</div>
          </div>
          <div class="tbody">
            <div v-for="(r, n) in topRows" :key="r.t" class="row top">
              <div class="c1">
                <span class="trunk" :class="{ first: n === 0, end: n === 2 }"><b class="ex">{{ r.ex }}</b></span>
                <svg v-if="r.chk" class="nic ck" viewBox="0 0 24 24" v-html="I.ncheck"></svg>
                <svg class="nic" viewBox="0 0 24 24" v-html="I[r.i]"></svg>
                <span class="name">{{ r.t }}</span>
              </div>
              <div class="c2"></div>
            </div>
            <div v-for="(r, n) in kids" :key="n" class="row kid">
              <div class="c1">
                <span class="branch" :class="{ end: n === kids.length - 1 }"></span>
                <span class="box"><svg viewBox="0 0 12 12"><path d="M0 0h12v12H0z" fill="#2fb04a"/><path d="M2.500 6l3 3 4-6" fill="none" stroke="#fff" stroke-width="2"/></svg></span>
                <svg class="nic" viewBox="0 0 24 24" v-html="I[r.i]"></svg>
                <span class="name" :class="{ grey: r.g, bold: r.b }">{{ r.t }}</span>
              </div>
              <div class="c2"></div>
            </div>
            <div v-for="n in 5" :key="'e' + n" class="row"><div class="c1"></div><div class="c2"></div></div>
            <div class="row stub"><div class="c1"></div><div class="c2"></div></div>
          </div>
          <div class="hscroll">
            <i class="al"></i>
            <div class="thumb">III</div>
            <i class="ar"></i>
          </div>
        </div>
        <div class="pfoot"></div>
      </div>
    </div>
  </div>
</template>

<style>
html, body { margin: 0; padding: 0; background: #fff; overflow: hidden; }
</style>

<style scoped>
.app {
  width: 1705px;
  height: 914px;
  overflow: hidden;
  display: flex;
  flex-direction: column;
  position: relative;
  font-family: "Noto Sans", "Noto Sans CJK SC", sans-serif;
  color: #333;
}
.defs { position: absolute; }
.tabs { height: 12px; background: #dadada; overflow: hidden; flex: none; }
.tabrow { display: flex; margin-top: -9px; height: 21px; font-size: 14px; line-height: 16px; }
.file { width: 86px; padding-left: 14px; box-sizing: border-box; background: #4e9ab4; color: #fff; margin-right: 261px; }
.tab { padding: 0 15.7px; white-space: nowrap; }
.tab.active { width: 57px; box-sizing: border-box; padding: 0; text-align: center; background: #fff; }
.search {
  margin-left: auto; width: 136px; height: 17px; box-sizing: border-box;
  background: #fff; border: 1px solid #aaa; color: #aaa; font-size: 12px; padding-left: 3px;
  line-height: 15px;
}
.ribbon { height: 67px; flex: none; display: flex; background: #fff; border-bottom: 1px solid #d6d6d6; padding-top: 4px; box-sizing: content-box; }
.group { height: 64px; box-sizing: border-box; border-right: 1px solid #dcdcdc; flex: none; overflow: hidden; }
.group.last { border-right: 0; }
.grow { display: flex; align-items: center; height: 24px; margin-top: 10px; }
.cell { flex: none; display: flex; align-items: center; justify-content: center; height: 24px; }
.ic { width: 24px; height: 24px; display: block; flex: none; }
.tri { width: 0; height: 0; border-left: 3.500px solid transparent; border-right: 3.500px solid transparent; border-top: 4px solid #222; display: inline-block; flex: none; }
.glabel { display: flex; align-items: center; height: 16px; margin-top: 15px; font-size: 14px; color: #1f7d92; line-height: 16px; white-space: nowrap; }
.lowtri { flex: none; }
.toolbar { height: 35px; flex: none; display: flex; align-items: center; background: #fff; padding-top: 1px; box-sizing: border-box; }
.toolbar .cell.on { height: 30px; background: #c8e3e9; box-shadow: inset 0 0 0 1px #b5d6dd; }
.toolbar .sepc { height: 30px; background: #dcdcdc; }
.menut { font-size: 14px; white-space: nowrap; color: #333; }
.sel { width: 100%; height: 24px; box-sizing: border-box; border: 1px solid #aaa; background: #fff; display: flex; align-items: center; justify-content: space-between; padding: 0 6px 0 2px; font-size: 14px; color: #333; }
.tri.big { border-left-width: 4.500px; border-right-width: 4.500px; border-top-width: 5px; }
.view { flex: 1; position: relative; overflow: hidden; background: linear-gradient(#2e2f60 0%, #4d4d72 20%, #6f6f82 50%, #8a8a8e 75%, #9c9c9c 100%); }
.scene { position: absolute; left: 0; top: 0; }
.wm { position: absolute; left: 1502px; top: 710px; color: #d4d4d4; font-family: "Liberation Sans", "Noto Sans CJK SC", sans-serif; }
.wm1 { font-size: 42px; font-weight: 700; line-height: 48px; white-space: nowrap; }
.wm2 { font-size: 13.500px; line-height: 14px; letter-spacing: 4.300px; white-space: nowrap; margin-top: -1px; }
.panel { position: absolute; left: 8px; top: 18px; width: 246px; height: 646px; background: #fff; display: flex; flex-direction: column; box-sizing: border-box; }
.ptitle { height: 22px; flex: none; background: #4e9ab4; color: #fff; font-size: 14px; font-weight: 700; display: flex; align-items: center; justify-content: space-between; padding: 0 5px; line-height: 22px; }
.px { font-size: 15px; font-weight: 700; }
.table { margin: 6px 5px 0 7px; flex: none; height: 607px; border: 1px solid #dcdcdc; border-right-width: 3px; box-sizing: border-box; display: flex; flex-direction: column; overflow: hidden; }
.thead { display: flex; height: 24px; flex: none; background: #f3f3f3; font-size: 15px; line-height: 24px; border-bottom: 1px solid #e2e2e2; box-sizing: border-box; color: #333; }
.c1 { width: 199px; flex: none; display: flex; align-items: center; box-sizing: border-box; border-right: 1px solid #e2e2e2; height: 100%; }
.c2 { flex: 1; overflow: hidden; white-space: nowrap; }
.thead .c1 { padding-left: 6px; }
.thead .c2 { padding-left: 7px; }
.up { width: 0; height: 0; border-left: 5px solid transparent; border-right: 5px solid transparent; border-bottom: 6px solid #222; margin-left: 18px; }
.tbody { flex: 1; overflow: hidden; }
.row { display: flex; height: 24px; border-bottom: 1px solid #ececec; box-sizing: border-box; font-size: 15px; line-height: 23px; }
.row:nth-child(even) { background: #fafafa; }
.row.stub { height: 10px; border-bottom: 0; }
.trunk { width: 10px; margin-left: 5px; height: 24px; position: relative; flex: none; display: block; }
.trunk::before { content: ""; position: absolute; left: 4px; top: 0; bottom: 0; border-left: 1px dotted #888; }
.trunk.first::before { top: 12px; }
.trunk.end::before { bottom: 12px; }
.ex { position: absolute; left: 0; top: 8px; width: 9px; height: 9px; box-sizing: border-box; background: #fff; border: 1px solid #bbb; font: 400 9px/7px "Liberation Sans", sans-serif; text-align: center; color: #333; }
.top .nic { margin-left: 5px; }
.nic { width: 16px; height: 16px; flex: none; display: block; margin-top: 3px; }
.top .name { margin-left: 2px; }
.top .ck { width: 15px; height: 15px; margin-right: -3px; margin-left: 5px; }
.branch { width: 11px; margin-left: 28px; height: 24px; position: relative; flex: none; display: block; }
.branch::before { content: ""; position: absolute; left: 0; top: 0; bottom: 0; border-left: 1px dotted #888; }
.branch.end::before { bottom: 11px; }
.branch::after { content: ""; position: absolute; left: 0; right: 0; top: 12px; border-top: 1px dotted #888; }
.box { width: 13px; height: 13px; box-sizing: border-box; border: 1px solid #111; background: #fff; flex: none; display: block; margin-right: 2px; margin-top: 3px; }
.box svg { display: block; width: 11px; height: 11px; }
.name { white-space: nowrap; margin-left: 3px; color: #333; margin-top: 4px; }
.grey { color: #aaa; }
.bold { font-weight: 700; }
.hscroll { height: 21px; flex: none; background: #f0f0f0; display: flex; align-items: center; position: relative; }
.al { width: 0; height: 0; border-top: 4px solid transparent; border-bottom: 4px solid transparent; border-right: 5px solid #444; margin-left: 7px; }
.ar { width: 0; height: 0; border-top: 4px solid transparent; border-bottom: 4px solid transparent; border-left: 5px solid #444; margin-left: auto; margin-right: 8px; }
.thumb { width: 59px; height: 19px; margin-left: 10px; box-sizing: border-box; border: 1px solid #aaa; border-radius: 2px; background: linear-gradient(#f2f2f2, #cfcfcf); font: 10px/17px "Liberation Sans", sans-serif; text-align: center; color: #555; }
.pfoot { height: 4px; margin: 0 5px 0 7px; border: 1px solid #b0b0b0; background: #e4e4e4; flex: none; box-sizing: border-box; }
</style>
